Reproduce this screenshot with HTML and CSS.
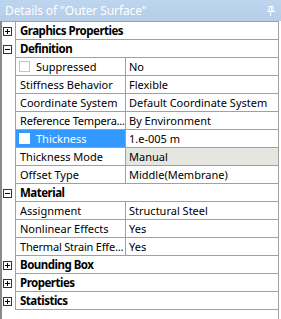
FILE: index.html
```html
<html>
<head>
<title>Details of "Outer Surface"</title>
<link rel="stylesheet" href="styles.css">
</head>
<body>

<div class="panel">
	<div class="titlebar">
		<span class="title">Details of "Outer Surface"</span>
		<svg class="pin" width="8" height="10" viewBox="0 0 8 10">
			<rect x="2" y="0.5" width="4" height="5" fill="none" stroke="#fff"/>
			<rect x="4" y="1" width="1" height="4" fill="#fff"/>
			<rect x="0" y="5" width="8" height="1" fill="#fff"/>
			<rect x="3" y="6" width="1" height="4" fill="#fff"/>
		</svg>
	</div>

	<div class="grid">
		<div class="row category">
			<div class="gutter"><svg class="toggle" width="9" height="9"><rect x="0.5" y="0.5" width="8" height="8" fill="#fff" stroke="#333"/><rect x="2" y="4" width="5" height="1" fill="#000"/><rect x="4" y="2" width="1" height="5" fill="#000"/></svg></div>
			<div class="cell head">Graphics Properties</div>
		</div>
		<div class="row category">
			<div class="gutter"><svg class="toggle" width="9" height="9"><rect x="0.5" y="0.5" width="8" height="8" fill="#fff" stroke="#333"/><rect x="2" y="4" width="5" height="1" fill="#000"/></svg></div>
			<div class="cell head">Definition</div>
		</div>
		<div class="row">
			<div class="gutter"></div>
			<div class="cell name"><span class="check"></span>Suppressed</div>
			<div class="cell value">No</div>
		</div>
		<div class="row">
			<div class="gutter"></div>
			<div class="cell name">Stiffness Behavior</div>
			<div class="cell value">Flexible</div>
		</div>
		<div class="row">
			<div class="gutter"></div>
			<div class="cell name">Coordinate System</div>
			<div class="cell value">Default Coordinate System</div>
		</div>
		<div class="row">
			<div class="gutter"></div>
			<div class="cell name clip">Reference Tempera...</div>
			<div class="cell value">By Environment</div>
		</div>
		<div class="row">
			<div class="gutter"></div>
			<div class="cell name selected"><span class="check filled"></span>Thickness</div>
			<div class="cell value">1.e-005 m</div>
		</div>
		<div class="row">
			<div class="gutter"></div>
			<div class="cell name">Thickness Mode</div>
			<div class="cell value readonly">Manual</div>
		</div>
		<div class="row">
			<div class="gutter"></div>
			<div class="cell name">Offset Type</div>
			<div class="cell value">Middle(Membrane)</div>
		</div>
		<div class="row category">
			<div class="gutter"><svg class="toggle" width="9" height="9"><rect x="0.5" y="0.5" width="8" height="8" fill="#fff" stroke="#333"/><rect x="2" y="4" width="5" height="1" fill="#000"/></svg></div>
			<div class="cell head">Material</div>
		</div>
		<div class="row">
			<div class="gutter"></div>
			<div class="cell name">Assignment</div>
			<div class="cell value">Structural Steel</div>
		</div>
		<div class="row">
			<div class="gutter"></div>
			<div class="cell name">Nonlinear Effects</div>
			<div class="cell value">Yes</div>
		</div>
		<div class="row">
			<div class="gutter"></div>
			<div class="cell name clip">Thermal Strain Effe...</div>
			<div class="cell value">Yes</div>
		</div>
		<div class="row category">
			<div class="gutter"><svg class="toggle" width="9" height="9"><rect x="0.5" y="0.5" width="8" height="8" fill="#fff" stroke="#333"/><rect x="2" y="4" width="5" height="1" fill="#000"/><rect x="4" y="2" width="1" height="5" fill="#000"/></svg></div>
			<div class="cell head">Bounding Box</div>
		</div>
		<div class="row category">
			<div class="gutter"><svg class="toggle" width="9" height="9"><rect x="0.5" y="0.5" width="8" height="8" fill="#fff" stroke="#333"/><rect x="2" y="4" width="5" height="1" fill="#000"/><rect x="4" y="2" width="1" height="5" fill="#000"/></svg></div>
			<div class="cell head">Properties</div>
		</div>
		<div class="row category">
			<div class="gutter"><svg class="toggle" width="9" height="9"><rect x="0.5" y="0.5" width="8" height="8" fill="#fff" stroke="#333"/><rect x="2" y="4" width="5" height="1" fill="#000"/><rect x="4" y="2" width="1" height="5" fill="#000"/></svg></div>
			<div class="cell head">Statistics</div>
		</div>
	</div>
</div>

</body>
</html>
```

FILE: styles.css
```css
body { margin: 0; background-color: #fff; font-family: "Noto Sans", "Liberation Sans", sans-serif; font-size: 11px; color: #000; }

.panel { width: 281px; height: 319px; display: flex; flex-direction: column; }

.titlebar { height: 21px; flex: none; display: flex; align-items: center; justify-content: space-between;
	padding: 0 6px 1px 5px; box-sizing: border-box;
	background: linear-gradient(#bdd5ee, #b5cde7); color: #fff; font-size: 12px; letter-spacing: -0.1px; }
.pin { display: block; margin-top: 2px; }

.grid { flex: 1; width: 279px; box-sizing: border-box;
	border-left: 2px solid #8a8a8a; border-top: 1px solid #a0a0a0; border-right: 1px solid #a0a0a0; }

.row { display: flex; height: 18px; }
.gutter { width: 13px; flex: none; display: flex; align-items: center; padding-left: 1px; box-sizing: border-box; }
.toggle { display: block; }

.cell { height: 18px; line-height: 17px; box-sizing: border-box; border-bottom: 1px solid #a0a0a0;
	white-space: nowrap; overflow: hidden; display: flex; align-items: center; }
.head { flex: 1; border-left: 1px solid #a0a0a0; padding-left: 4px; font-weight: bold; font-size: 11.5px; letter-spacing: -0.5px; }
.name { width: 111px; flex: none; border-left: 1px solid #a0a0a0; border-right: 1px solid #a0a0a0; padding-left: 4px; }
.clip { letter-spacing: -0.2px; }
.value { flex: 1; padding-left: 3px; }

.check { width: 11px; height: 11px; box-sizing: border-box; border: 1px solid #c4c4c4; background: #fff;
	margin: 0 6px 0 -1px; flex: none; }
.selected { background-color: #3399ff; color: #fff; }
.check.filled { border-color: #fff; }
.readonly { background-color: #e6e6e1; }
```
